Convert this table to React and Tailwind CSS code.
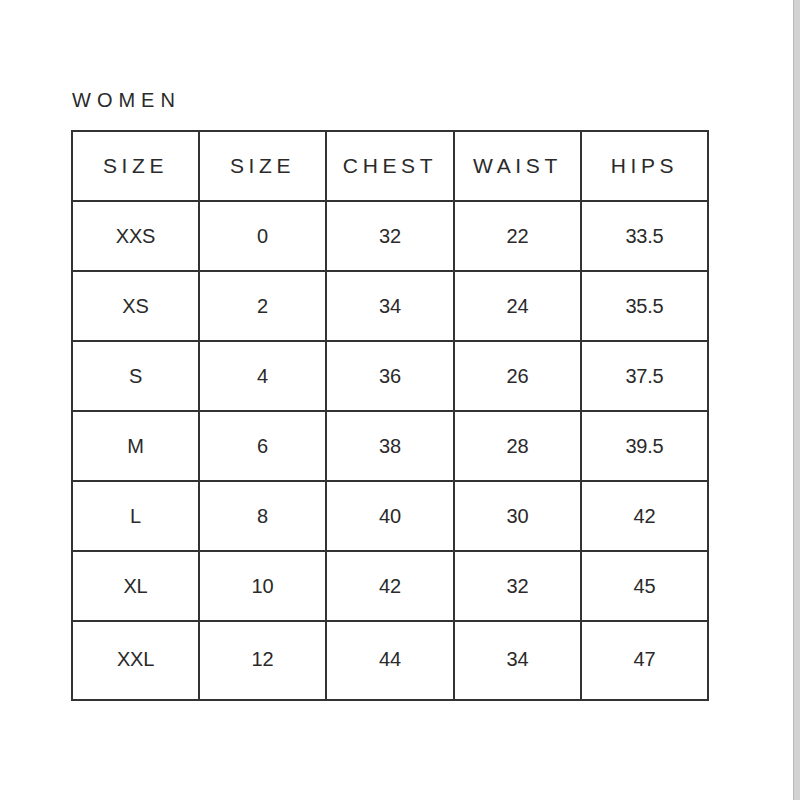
import React from "react";

const headers = ["SIZE", "SIZE", "CHEST", "WAIST", "HIPS"];

const rows = [
  ["XXS", "0", "32", "22", "33.5"],
  ["XS", "2", "34", "24", "35.5"],
  ["S", "4", "36", "26", "37.5"],
  ["M", "6", "38", "28", "39.5"],
  ["L", "8", "40", "30", "42"],
  ["XL", "10", "42", "32", "45"],
  ["XXL", "12", "44", "34", "47"],
];

const App = () => {
  return (
    <div className="w-[800px] h-[800px] bg-white flex font-['Liberation_Sans',Arial,sans-serif] text-[#2a2a2a]">
      <div className="flex-1 pl-[71px] pt-[90px]">
        <h2 className="text-[20px] leading-[20px] tracking-[0.3em] pl-[1px]">WOMEN</h2>

        <div className="mt-[20px] w-[638px] grid grid-cols-[127px_127px_128px_127px_127px] border-l-2 border-t-2 border-[#333]">
          {headers.map((h, i) => (
            <div
              key={i}
              className="h-[70px] flex items-center justify-center border-r-2 border-b-2 border-[#333] text-[21px] tracking-[0.22em] pb-[1px]"
            >
              {h}
            </div>
          ))}

          {rows.map((row, r) =>
            row.map((cell, c) => (
              <div
                key={r + "-" + c}
                className={
                  "flex items-center justify-center border-r-2 border-b-2 border-[#333] text-[20px] tracking-[-0.01em] " +
                  (r === rows.length - 1 ? "h-[79px] pb-[4px]" : "h-[70px]")
                }
              >
                {cell}
              </div>
            ))
          )}
        </div>
      </div>

      {/* scrollbar strip on the right edge */}
      <div className="w-[7px] h-full bg-[#d2d2d2] border-l border-[#b8b8b8]" />
    </div>
  );
};

export default App;
